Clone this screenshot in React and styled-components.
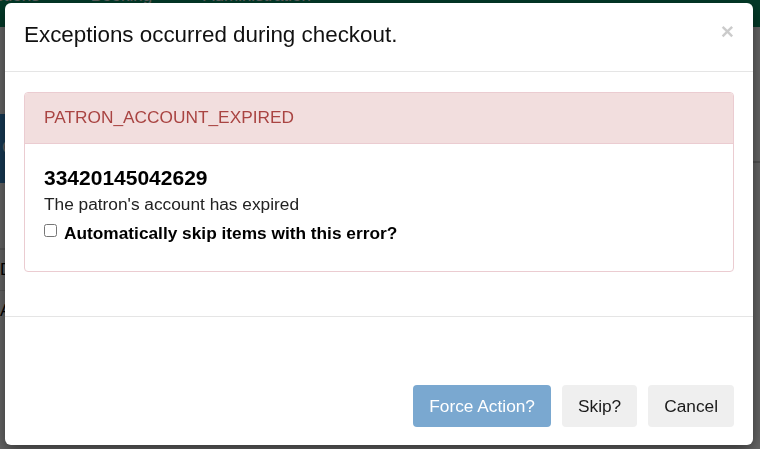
import React from "react";
import styled, { createGlobalStyle } from "styled-components";

const GlobalStyle = createGlobalStyle`
  html, body {
    margin: 0;
    padding: 0;
    height: 100%;
    overflow: hidden;
    font-family: "Liberation Sans", Arial, sans-serif;
  }
  * {
    box-sizing: border-box;
  }
`;

const navItems = ["Actions", "Booking", "Administration"];

const CheckoutExceptions = ({ code, barcode, message, onForce, onSkip, onCancel }) => {
  return (
    <Dialog role="dialog">
      <Header>
        <Title>Exceptions occurred during checkout.</Title>
        <Close type="button" aria-label="Close" onClick={onCancel}>
          ×
        </Close>
      </Header>
      <Body>
        <Panel>
          <PanelHeading>{code}</PanelHeading>
          <PanelBody>
            <Barcode>{barcode}</Barcode>
            <Message>{message}</Message>
            <SkipLabel>
              <Checkbox type="checkbox" />
              Automatically skip items with this error?
            </SkipLabel>
          </PanelBody>
        </Panel>
      </Body>
      <Footer>
        <Button variant="primary" disabled onClick={onForce}>
          Force Action?
        </Button>
        <Button onClick={onSkip}>Skip?</Button>
        <Button onClick={onCancel}>Cancel</Button>
      </Footer>
    </Dialog>
  );
};

const App = () => {
  return (
    <>
      <GlobalStyle />
      <Page>
        <NavBar>
          <NavList>
            {navItems.map((item) => (
              <NavItem key={item}>{item}</NavItem>
            ))}
          </NavList>
        </NavBar>
        <Content>
          <SideColumn>
            <TabBar>Checkout</TabBar>
            <SideRow>Due date</SideRow>
            <SideRow>Do not send</SideRow>
            <SideRow>Actions</SideRow>
          </SideColumn>
          <MainColumn>
            <MainHeader />
          </MainColumn>
        </Content>
      </Page>
      <Backdrop />
      <ModalLayer>
        <CheckoutExceptions
          code="PATRON_ACCOUNT_EXPIRED"
          barcode="33420145042629"
          message="The patron's account has expired"
        />
      </ModalLayer>
    </>
  );
};

export default App;

const Page = styled.div`
  min-height: 100vh;
  background: #ffffff;
  display: flex;
  flex-direction: column;
`;

const NavBar = styled.div`
  height: 27px;
  background: #089164;
  overflow: hidden;
`;

const NavList = styled.ul`
  display: flex;
  gap: 51px;
  list-style: none;
  margin: -14px 0 0 -16px;
  padding: 0;
`;

const NavItem = styled.li`
  font-size: 17px;
  line-height: 20px;
  color: #eeeeee;
`;

const Content = styled.div`
  display: flex;
  flex: 1;
`;

const SideColumn = styled.div`
  width: 300px;
  padding-top: 87px;
  display: flex;
  flex-direction: column;
`;

const TabBar = styled.div`
  height: 69px;
  background: #3a90d4;
  color: #ffffff;
  font-size: 17px;
  padding: 24px 2px;
`;

const SideRow = styled.div`
  font-size: 17px;
  color: #000000;
  padding: 10px 0;
  height: 41px;
  border-top: 1px solid #dddddd;

  &:nth-of-type(2) {
    height: 66px;
    border-top: none;
    border-bottom: 1px solid #dddddd;
    color: transparent;
  }
`;

const MainColumn = styled.div`
  flex: 1;
`;

const MainHeader = styled.div`
  height: 136px;
  border-bottom: 2px solid #cccccc;
`;

const Backdrop = styled.div`
  position: fixed;
  inset: 0;
  background: rgba(0, 0, 0, 0.6);
`;

const ModalLayer = styled.div`
  position: fixed;
  inset: 0;
  padding: 3px 0 0 5px;
`;

const Dialog = styled.div`
  width: 748px;
  height: 442px;
  background: #ffffff;
  border-radius: 6px;
  box-shadow: 0 5px 15px rgba(0, 0, 0, 0.5);
  display: flex;
  flex-direction: column;
`;

const Header = styled.div`
  display: flex;
  justify-content: space-between;
  align-items: flex-start;
  padding: 16px 19px 20px;
  border-bottom: 1px solid #e5e5e5;
`;

const Title = styled.h4`
  margin: 0;
  font-size: 22.4px;
  font-weight: 400;
  line-height: 32px;
  color: #111111;
`;

const Close = styled.button`
  margin-top: -4px;
  padding: 0;
  border: 0;
  background: transparent;
  font-family: inherit;
  font-size: 22.7px;
  font-weight: 700;
  line-height: 32px;
  color: #000000;
  opacity: 0.2;
  cursor: pointer;
`;

const Body = styled.div`
  padding: 20px 19px 44px;
  border-bottom: 1px solid #e5e5e5;
`;

const Panel = styled.div`
  border: 1px solid #ebccd1;
  border-radius: 4px;
  overflow: hidden;
`;

const PanelHeading = styled.div`
  background: #f2dede;
  color: #a94442;
  font-size: 17.3px;
  line-height: 1.1;
  padding: 14.5px 19px 16.5px;
  border-bottom: 1px solid #ebccd1;
`;

const PanelBody = styled.div`
  padding: 22px 19px 26px;
`;

const Barcode = styled.h4`
  margin: 0 0 3.3px;
  font-size: 21px;
  font-weight: 700;
  line-height: 1.1;
  color: #000000;
`;

const Message = styled.div`
  font-size: 17.3px;
  line-height: 24.7px;
  color: #222222;
`;

const SkipLabel = styled.label`
  display: flex;
  align-items: flex-start;
  margin-top: 3.5px;
  font-size: 17.3px;
  font-weight: 700;
  line-height: 24.7px;
  color: #000000;
`;

const Checkbox = styled.input`
  width: 13px;
  height: 13px;
  margin: 3.5px 7px 0 0;
`;

const Footer = styled.div`
  flex: 1;
  display: flex;
  justify-content: flex-end;
  align-items: flex-end;
  gap: 11px;
  padding: 0 19px 18px;
`;

const Button = styled.button`
  height: 42px;
  padding: 0 16px;
  border: 0;
  border-radius: 4px;
  font-family: inherit;
  font-size: 17.3px;
  background: ${({ variant }) => (variant === "primary" ? "#7aa8d0" : "#efefef")};
  color: ${({ variant }) => (variant === "primary" ? "#ffffff" : "#1a1a1a")};
  cursor: ${({ disabled }) => (disabled ? "not-allowed" : "pointer")};
`;
